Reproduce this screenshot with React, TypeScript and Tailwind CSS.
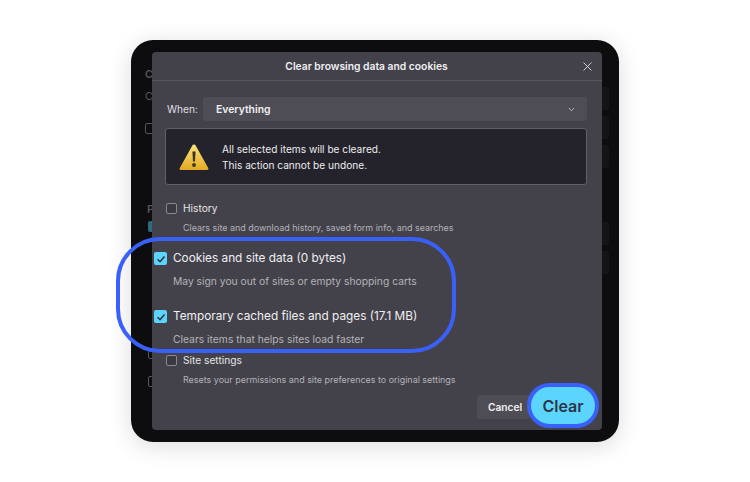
import React from "react";

function Check({ on, small }: { on?: boolean; small?: boolean }) {
  if (on)
    return (
      <span className="-mt-px flex h-[13px] w-[13px] shrink-0 items-center justify-center rounded-[2px] bg-[#5cd5fb]">
        <svg width="10" height="10" viewBox="0 0 10 10" fill="none">
          <path d="M1.6 5.3 L4 7.7 L8.5 2.4" stroke="#2b2f3f" strokeWidth="1.5" />
        </svg>
      </span>
    );
  return <span className={`block shrink-0 rounded-[2px] border border-[#8a898f] bg-[#3a3940] ${small ? "h-[11px] w-[11px]" : "h-[14px] w-[14px]"}`} />;
}

function PlainRow({ title, desc, h }: { title: string; desc: string; h: string }) {
  return (
    <div className={`${h} pl-px`}>
      <div className="flex h-[14px] items-center gap-[6px]">
        <Check small />
        <span className="pt-px text-[10.2px] text-[#e6e5e8]">{title}</span>
      </div>
      <p className="mt-[6px] pl-[17px] text-[8.95px] leading-[14px] text-[#b3b2b7]">{desc}</p>
    </div>
  );
}

function BigRow({ title, desc, h }: { title: string; desc: string; h: string }) {
  return (
    <div className={`${h} -ml-[11px]`}>
      <div className="flex h-[16px] items-center gap-[6px]">
        <Check on />
        <span className="text-[11.8px] text-[#f0eff2]">{title}</span>
      </div>
      <p className="mt-[7px] pl-[19px] text-[10.3px] leading-[14px] text-[#b3b2b7]">{desc}</p>
    </div>
  );
}

export default function App() {
  return (
    <div className="flex h-[482px] w-[750px] items-center justify-center bg-white font-['Inter','Liberation_Sans',sans-serif]">
      <div className="relative flex h-[402px] w-[488px] rounded-[22px] bg-[#0d0d0f] pt-3 shadow-[0_4px_24px_rgba(0,0,0,0.14)]">
        <div className="h-full w-[21px] shrink-0 overflow-hidden pl-[14px] text-[11px] text-[#55555a]">
          <div className="mt-[15px] font-semibold leading-[14px]">C</div>
          <div className="mt-2 leading-[14px]">C</div>
          <div className="mt-[20px] h-[11px] w-[11px] rounded-[2px] border border-[#55555a]" />
          <div className="ml-[2px] mt-[68px] font-semibold leading-[14px]">P</div>
          <div className="ml-[3px] mt-[5px] h-[11px] w-[11px] rounded-[2px] bg-[#2a6b80]" />
          <div className="ml-[3px] mt-[116px] h-[11px] w-[11px] rounded-[2px] border border-[#55555a]" />
          <div className="ml-[3px] mt-[17px] h-[11px] w-[11px] rounded-[2px] border border-[#55555a]" />
        </div>

        <div className="flex h-[378px] w-[450px] shrink-0 flex-col rounded-[4px] bg-[#43424a]">
          <div className="relative flex h-[29px] shrink-0 items-center justify-center border-b border-[#57565d] pr-[21px] pt-px text-[10.3px] font-semibold text-[#f0eff2]">
            Clear browsing data and cookies
            <svg className="absolute right-[10px] top-[10px]" width="9" height="9" viewBox="0 0 9 9" fill="none">
              <path d="M0.6 0.6 L8.4 8.4 M8.4 0.6 L0.6 8.4" stroke="#e6e5e8" strokeWidth="0.9" />
            </svg>
          </div>

          <div className="flex flex-col pl-[13px] pr-[15px] pt-4">
            <div className="flex h-6 items-center pl-[2px]">
              <span className="w-[36px] pt-px text-[10.2px] text-[#e0dfe3]">When:</span>
              <div className="flex h-6 flex-1 items-center justify-between rounded-[3px] bg-[#4e4d55] pl-[13px] pr-[12px]">
                <span className="pt-px text-[10.4px] font-semibold text-[#f0eff2]">Everything</span>
                <svg width="7" height="5" viewBox="0 0 7 5" fill="none">
                  <path d="M0.8 1 L3.5 3.7 L6.2 1" stroke="#c9c8cc" strokeWidth="0.9" />
                </svg>
              </div>
            </div>

            <div className="mt-[7px] flex h-[57px] items-center gap-[13px] rounded-[3px] border border-[#62616a] bg-[#24232b] pl-[13px]">
              <svg width="30" height="28" viewBox="0 0 30 28">
                <defs>
                  <linearGradient id="warn" x1="0" y1="0" x2="0" y2="1">
                    <stop offset="0" stopColor="#fbe57a" />
                    <stop offset="1" stopColor="#e5a825" />
                  </linearGradient>
                </defs>
                <path d="M15 1.5 C15.8 1.5 16.4 1.9 16.8 2.7 L29.2 25 C29.8 26.2 29.3 27 28 27 L2 27 C0.7 27 0.2 26.2 0.8 25 L13.2 2.7 C13.6 1.9 14.2 1.5 15 1.5 Z" fill="url(#warn)" />
                <path d="M13.4 8.5 L16.6 8.5 L16 18.5 L14 18.5 Z" fill="#3a3324" />
                <circle cx="15" cy="22" r="1.9" fill="#3a3324" />
              </svg>
              <div className="pt-px text-[10.15px] leading-[16px] text-[#ecebee]">
                <div>All selected items will be cleared.</div>
                <div>This action cannot be undone.</div>
              </div>
            </div>

            <div className="mt-4 flex flex-col">
              <PlainRow h="h-[50px]" title="History" desc="Clears site and download history, saved form info, and searches" />
              <BigRow h="h-[58px]" title="Cookies and site data (0 bytes)" desc="May sign you out of sites or empty shopping carts" />
              <BigRow h="h-[44px]" title="Temporary cached files and pages (17.1 MB)" desc="Clears items that helps sites load faster" />
              <PlainRow h="h-[35px]" title="Site settings" desc="Resets your permissions and site preferences to original settings" />
            </div>

            <div className="mt-[7px] flex justify-end pr-[57px]">
              <div className="flex h-6 w-[53px] items-center rounded-[3px] bg-[#4e4d55] pl-[11px] pt-px text-[10.2px] font-semibold text-[#f0eff2]">Cancel</div>
            </div>
          </div>
        </div>

        <div className="flex flex-1 flex-col pt-[35px]">
          <div className="h-[23px] w-[7px] rounded-r-[3px] bg-[#151517]" />
          <div className="mt-[6px] h-[23px] w-[7px] rounded-r-[3px] bg-[#151517]" />
          <div className="mt-[6px] h-[23px] w-[7px] rounded-r-[3px] bg-[#151517]" />
          <div className="mt-[54px] h-[23px] w-[7px] rounded-r-[3px] bg-[#151517]" />
          <div className="mt-[6px] h-[23px] w-[7px] rounded-r-[3px] bg-[#151517]" />
        </div>

        <div className="absolute left-[-15px] top-[197px] h-[116px] w-[340px] rounded-[44px] border-4 border-[#3a60fa]" />
        <div className="absolute left-[396px] top-[343px] flex h-[45px] w-[72px] items-center justify-center rounded-[23px] border-4 border-[#3a60fa] bg-[#5cd5fe] text-[16px] font-semibold text-[#2c3545]">
          Clear
        </div>
      </div>
    </div>
  );
}
